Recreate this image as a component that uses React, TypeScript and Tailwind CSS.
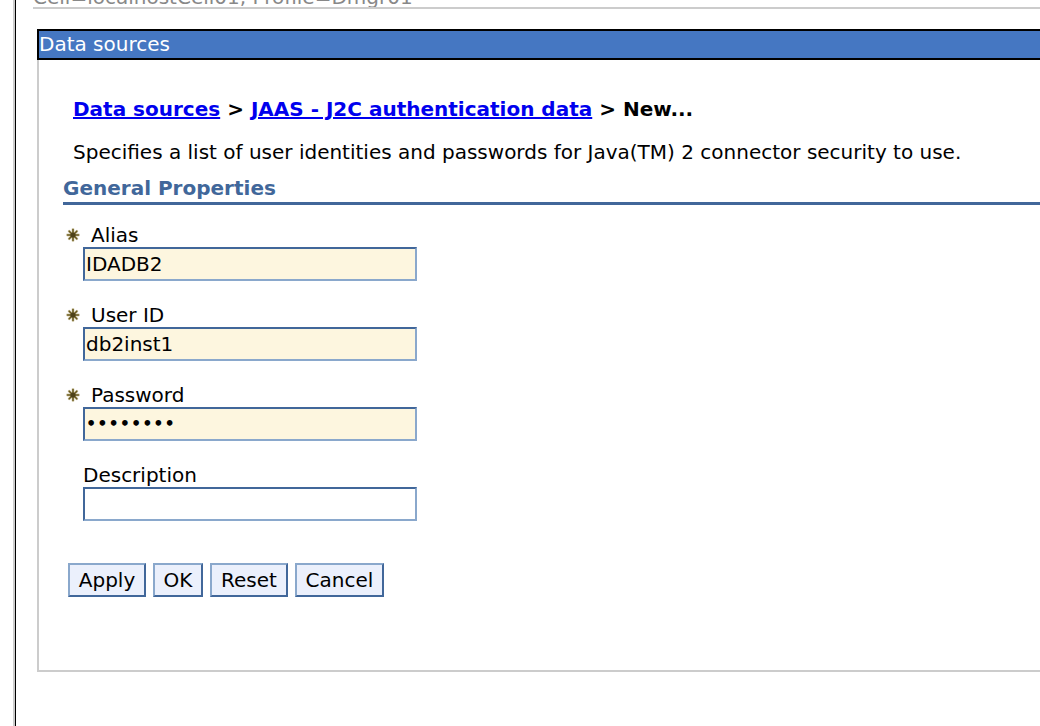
import React from 'react';

const font = { fontFamily: '"DejaVu Sans", Verdana, sans-serif' };

const Required = () => (
  <svg width="14" height="14" viewBox="0 0 14 14" className="shrink-0">
    <g stroke="#b3a36a" strokeWidth="2.8" strokeLinecap="round" opacity="0.5">
      <line x1="7" y1="1.5" x2="7" y2="12.5" />
      <line x1="1.5" y1="7" x2="12.5" y2="7" />
      <line x1="3.2" y1="3.2" x2="10.8" y2="10.8" />
      <line x1="10.8" y1="3.2" x2="3.2" y2="10.8" />
    </g>
    <g stroke="#6a5a1e" strokeWidth="1.6" strokeLinecap="round">
      <line x1="7" y1="1.5" x2="7" y2="12.5" />
      <line x1="1.5" y1="7" x2="12.5" y2="7" />
      <line x1="3.2" y1="3.2" x2="10.8" y2="10.8" />
      <line x1="10.8" y1="3.2" x2="3.2" y2="10.8" />
    </g>
    <circle cx="7" cy="7" r="2.6" fill="#4f4217" />
  </svg>
);

const Field = ({ label, value, required, password }: { label: string; value: string; required?: boolean; password?: boolean }) => (
  <div className="flex flex-col">
    <div className="flex items-center h-[24px]">
      {required ? (
        <span className="w-[28px] pl-[3px] flex items-center"><Required /></span>
      ) : (
        <span className="w-[20px]" />
      )}
      <span className="text-[20px] text-black leading-none">{label}</span>
    </div>
    <div
      className={`ml-[20px] w-[334px] h-[34px] border-2 border-t-[#41679a] border-l-[#41679a] border-b-[#8aa8cc] border-r-[#8aa8cc] flex items-center px-[1px] text-[20px] text-black leading-none ${
        required ? 'bg-[#fdf6df]' : 'bg-white'
      }`}
    >
      {password ? <span className="tracking-[1px] text-[16px] font-bold">••••••••</span> : value}
    </div>
  </div>
);

const Btn = ({ children, w }: { children: React.ReactNode; w: string }) => (
  <button
    className={`${w} h-[34px] bg-[#ebf0fc] border-2 border-t-[#8aa8cc] border-l-[#8aa8cc] border-b-[#41679a] border-r-[#41679a] text-[20px] text-black leading-none`}
  >
    {children}
  </button>
);

export default function App() {
  return (
    <div className="w-[1040px] h-[726px] overflow-hidden bg-white flex" style={font}>
      <div className="w-[13px] shrink-0" />
      <div className="w-[2px] shrink-0 bg-[#cccccc]" />
      <div className="w-[1px] shrink-0 bg-black" />
      <div className="flex-1 flex flex-col min-w-0">
        <div className="ml-[17px] mt-[-12px] h-[21px] border-b-2 border-[#cccccc] text-[20px] text-[#888888] leading-[18px] whitespace-nowrap overflow-hidden">
          Cell=localhostCell01, Profile=Dmgr01
        </div>
        <div className="ml-[21px] mt-[20px] flex flex-col">
          <div className="h-[31px] border-2 border-r-0 border-black bg-[#4577c2] text-white text-[20px] leading-[27px]">
            Data sources
          </div>
          <div className="h-[612px] border-l-2 border-b-2 border-[#cccccc] pl-[34px] pt-[37px] flex flex-col">
            <div className="text-[20px] font-bold leading-[24px] whitespace-nowrap">
              <a href="#" className="text-[#0000ee] underline">Data sources</a>
              <span className="text-black"> &gt; </span>
              <a href="#" className="text-[#0000ee] underline">JAAS - J2C authentication data</a>
              <span className="text-black"> &gt; New...</span>
            </div>
            <div className="mt-[19px] text-[20px] text-black leading-[24px] whitespace-nowrap">
              Specifies a list of user identities and passwords for Java(TM) 2 connector security to use.
            </div>
            <div className="-ml-[10px] mt-[12px] border-b-[3px] border-[#41679a]">
              <span className="text-[20px] font-bold text-[#41679a] leading-[24px]">General Properties</span>
            </div>
            <div className="-ml-[10px] mt-[18px] flex flex-col gap-[22px]">
              <Field label="Alias" value="IDADB2" required />
              <Field label="User ID" value="db2inst1" required />
              <Field label="Password" value="" required password />
              <Field label="Description" value="" />
            </div>
            <div className="-ml-[5px] mt-[42px] flex gap-[7px]">
              <Btn w="w-[78px]">Apply</Btn>
              <Btn w="w-[50px]">OK</Btn>
              <Btn w="w-[78px]">Reset</Btn>
              <Btn w="w-[89px]">Cancel</Btn>
            </div>
          </div>
        </div>
      </div>
    </div>
  );
}
